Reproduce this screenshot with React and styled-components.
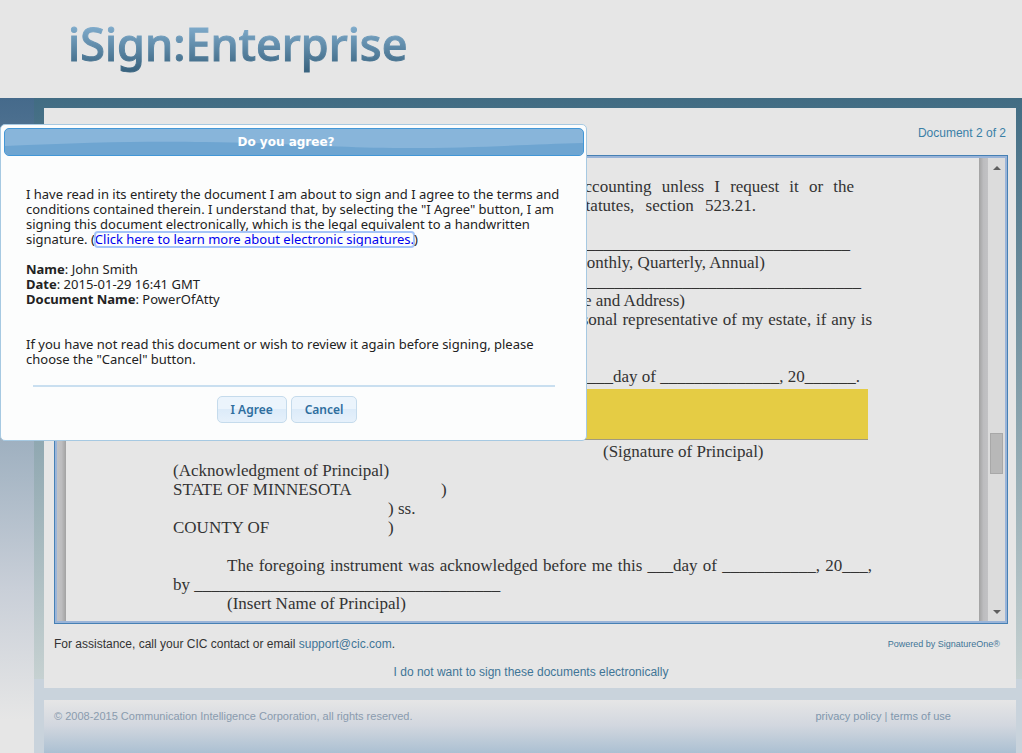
import { useState } from "react";
import styled, { createGlobalStyle } from "styled-components";

const GlobalStyle = createGlobalStyle`
    * {
        box-sizing: border-box;
    }

    body {
        margin: 0;
        background-color: #c9d3dc;
        font-family: "Liberation Sans", Arial, sans-serif;
        font-size: 12px;
        color: #333;
    }
`

// start and end are the distances from the edges of the printed text column
const paragraphs = [
    { text: "accounting unless I request it or the", start: 404, end: 18, justify: true },
    { text: "statutes, section 523.21.", start: 406, end: 116, justify: true },
    { text: "" },
    { text: "________________________________", start: 404, end: 22, right: true },
    { text: "(Monthly, Quarterly, Annual)", start: 393 },
    { text: "_________________________________", start: 404, end: 11, right: true },
    { text: "(Name and Address)", end: 187, right: true },
    { text: "personal representative of my estate, if any is", start: 387, justify: true },
    { text: "" },
    { text: "" },
    { text: "_____day of ______________, 20______.", end: 12, right: true },
];

const acknowledgment = [
    [{ text: "(Signature of Principal)", start: 430 }],
    [{ text: "(Acknowledgment of Principal)" }],
    [{ text: "STATE OF MINNESOTA", width: 268 }, { text: ")" }],
    [{ text: ") ss.", start: 215 }],
    [{ text: "COUNTY OF", width: 215 }, { text: ")" }],
    [{ text: "" }],
    [{ text: "The foregoing instrument was acknowledged before me this ___day of ___________, 20___,", start: 54, justify: true }],
    [{ text: "by ____________________________________" }],
    [{ text: "(Insert Name of Principal)", start: 54 }],
];

const DocumentPage = () => {
    return (
        <Page>
            <Sheet>
                {paragraphs.map((line, index) => (
                    <Line key={index} $start={line.start} $end={line.end}>
                        <Segment $justify={line.justify} $right={line.right}>{line.text}</Segment>
                    </Line>
                ))}
                <SignatureField aria-label="Signature of Principal" />
                {acknowledgment.map((line, index) => (
                    <Line key={index} $start={line[0].start}>
                        {line.map((segment, i) => (
                            <Segment key={i} $justify={segment.justify} $width={segment.width}>{segment.text}</Segment>
                        ))}
                    </Line>
                ))}
            </Sheet>
        </Page>
    );
};

const AgreeDialog = ({ onClose }) => {
    return (
        <Dialog role="dialog" aria-labelledby="agree-title">
            <TitleBar>
                <Gloss viewBox="0 0 580 26" preserveAspectRatio="none" aria-hidden="true">
                    <path d="M0 17 C80 13 150 12 200 13 C290 14 330 19 400 19 C480 19 530 15 580 14 V26 H0 Z" fill="#6ea5d1" />
                </Gloss>
                <Title id="agree-title">Do you agree?</Title>
            </TitleBar>
            <DialogBody>
                <P>
                    I have read in its entirety the document I am about to sign and I agree to the terms and
                    conditions contained therein. I understand that, by selecting the "I Agree" button, I am
                    signing this document electronically, which is the legal equivalent to a handwritten
                    signature. (<LearnLink href="#learn">Click here to learn more about electronic signatures.</LearnLink>)
                </P>
                <Details>
                    <li><B>Name</B>: John Smith</li>
                    <li><B>Date</B>: 2015-01-29 16:41 GMT</li>
                    <li><B>Document Name</B>: PowerOfAtty</li>
                </Details>
                <P>
                    If you have not read this document or wish to review it again before signing, please
                    choose the "Cancel" button.
                </P>
            </DialogBody>
            <ButtonPane>
                <Button type="button" onClick={onClose}>I Agree</Button>
                <Button type="button" onClick={onClose}>Cancel</Button>
            </ButtonPane>
        </Dialog>
    );
};

const App = () => {

    const [open, setOpen] = useState(true);

    return (
        <>
            <GlobalStyle />
            <Header>
                <Logo>iSign:Enterprise</Logo>
            </Header>
            <Body>
                <Gutter />
                <Content>
                    <Card>
                        <Counter>Document 2 of 2</Counter>
                        <Frame>
                            <DocumentPage />
                            <Scrollbar>
                                <ScrollButton type="button" aria-label="Scroll up">
                                    <svg width="8" height="4" viewBox="0 0 8 4"><path d="M0 4 L4 0 L8 4 Z" fill="#5f5f5f" /></svg>
                                </ScrollButton>
                                <Track><Thumb /></Track>
                                <ScrollButton type="button" aria-label="Scroll down">
                                    <svg width="8" height="4" viewBox="0 0 8 4"><path d="M0 0 L4 4 L8 0 Z" fill="#5f5f5f" /></svg>
                                </ScrollButton>
                            </Scrollbar>
                        </Frame>
                        <Assistance>
                            <span>For assistance, call your CIC contact or email <A href="mailto:support@cic.com">support@cic.com</A>.</span>
                            <Powered href="#signatureone">Powered by SignatureOne®</Powered>
                        </Assistance>
                        <OptOut>
                            <A href="#opt-out">I do not want to sign these documents electronically</A>
                        </OptOut>
                    </Card>
                    <Footer>
                        <span>© 2008-2015 Communication Intelligence Corporation, all rights reserved.</span>
                        <span><FooterLink href="#privacy">privacy policy</FooterLink> | <FooterLink href="#terms">terms of use</FooterLink></span>
                    </Footer>
                </Content>
            </Body>
            {open && <AgreeDialog onClose={() => setOpen(false)} />}
        </>
    );
};

const Header = styled.header`
    height: 98px;
    padding: 13px 68px;
    background-color: #e6e6e6;
`

const Logo = styled.h1`
    display: inline-block;
    margin: 0;
    font-family: "Noto Sans", sans-serif;
    font-size: 45px;
    font-weight: 500;
    line-height: 62px;
    color: transparent;
    -webkit-text-stroke: 1px transparent;
    background: linear-gradient(#7fabcb 22%, #3a6480 92%);
    background-clip: text;
`

const Body = styled.div`
    display: flex;
    min-height: calc(100vh - 98px);
`

const Gutter = styled.div`
    flex: 0 0 34px;
    background: linear-gradient(#456a8b, #a9b8c6 58%, #c9cfd8 75%, #e6e6e6 95%);
`

const Content = styled.div`
    flex: 1;
    display: flex;
    flex-direction: column;
    gap: 12px;
    padding: 10px 6px 0 10px;
    background: linear-gradient(#416c83, #c6d1d1) top / 100% 581px no-repeat #c9d3dc;
`

const Card = styled.main`
    padding: 17px 8px 8px 10px;
    background-color: #e6e6e6;
`

const Counter = styled.div`
    padding-right: 2px;
    margin-bottom: 14px;
    line-height: 16px;
    text-align: right;
    color: #3a80a6;
`

const Frame = styled.div`
    display: flex;
    height: 469px;
    border: 1px solid #4680b4;
    box-shadow: inset 0 0 0 2px #9ab4d8;
    padding: 2px;
`

const Page = styled.div`
    flex: 1;
    display: flex;
    padding: 0 9px;
    overflow: hidden;
    background:
        linear-gradient(to right, #c2c2c4, #bdbdbf 50%, #a2a2a2) left / 9px 100% no-repeat,
        linear-gradient(to left, #c2c2c4, #bdbdbf 50%, #a2a2a2) right / 9px 100% no-repeat;
`

const Sheet = styled.div`
    flex: 1;
    display: flex;
    flex-direction: column;
    justify-content: flex-end;
    padding: 0 107px 8px;
    font-family: "Liberation Serif", "Times New Roman", serif;
    font-size: 17px;
    line-height: 19px;
    color: #333;
`

const Line = styled.div`
    display: flex;
    flex: 0 0 19px;
    padding-left: ${({ $start = 0 }) => $start}px;
    padding-right: ${({ $end = 0 }) => $end}px;
    white-space: nowrap;
`

const Segment = styled.span`
    flex: ${({ $width }) => $width ? `0 0 ${$width}px` : 1};
    text-align: ${({ $right }) => $right ? 'right' : 'left'};
    text-align-last: ${({ $justify }) => $justify && 'justify'};
    white-space: ${({ $justify }) => $justify && 'normal'};
`

const SignatureField = styled.div`
    flex: 0 0 51px;
    margin: 3px 4px 2px 250px;
    background-color: #e5cc44;
    border-bottom: 1px solid #a09a80;
`

const Scrollbar = styled.div`
    flex: 0 0 17px;
    display: flex;
    flex-direction: column;
    background-color: #dcdcdc;
`

const ScrollButton = styled.button`
    display: flex;
    align-items: center;
    justify-content: center;
    height: 19px;
    padding: 0;
    border: 0;
    background: none;
`

const Track = styled.div`
    flex: 1;
    padding: 256px 2px 0;
`

const Thumb = styled.div`
    height: 41px;
    border: 1px solid #a8a8a8;
    background-color: #b8b8b8;
`

const Assistance = styled.div`
    display: flex;
    justify-content: space-between;
    padding: 12px 8px 0 0;
    line-height: 16px;
`

const OptOut = styled.div`
    padding: 12px 0 0;
    line-height: 16px;
    text-align: center;
`

const A = styled.a`
    color: #3f7596;
    text-decoration: none;
`

const Powered = styled(A)`
    font-size: 9px;
`

const Footer = styled.footer`
    flex: 1;
    display: flex;
    justify-content: space-between;
    padding: 8px 65px 0 10px;
    font-size: 11px;
    line-height: 16px;
    color: #8a9bae;
    background: linear-gradient(#e6e6e6, #d2d7df 48%, #abc0d2);
`

const FooterLink = styled.a`
    color: #7f97ad;
    text-decoration: none;
`

const Dialog = styled.div`
    position: absolute;
    top: 124px;
    left: 0;
    width: 587px;
    padding: 3px 2px 17px 3px;
    border: 1px solid #a6c9e2;
    border-radius: 5px;
    background-color: #fcfdfd;
    font-family: "Noto Sans", sans-serif;
    font-size: 13px;
    line-height: 15px;
    color: #222;
`

const TitleBar = styled.div`
    display: grid;
    height: 28px;
    border: 1px solid #4297d7;
    border-radius: 5px;
    background-color: #88b5da;
    overflow: hidden;
`

const Gloss = styled.svg`
    grid-area: 1 / 1;
    width: 100%;
    height: 26px;
`

const Title = styled.h2`
    grid-area: 1 / 1;
    margin: 0;
    padding-right: 16px;
    font-family: "DejaVu Sans", Verdana, sans-serif;
    font-size: 12px;
    line-height: 26px;
    text-align: center;
    color: #fff;
    z-index: 1;
`

const DialogBody = styled.div`
    padding: 31px 22px 0;
`

const P = styled.p`
    margin: 0;
`

const LearnLink = styled.a`
    display: inline-block;
    color: #00e;
    text-decoration: none;
    border-radius: 3px;
    outline: 2px solid #a4c4f8;
    outline-offset: -1px;
`

const Details = styled.ul`
    margin: 15px 0 30px;
    padding: 0;
    list-style: none;
`

const B = styled.b`
    font-weight: bold;
`

const ButtonPane = styled.div`
    display: flex;
    justify-content: center;
    gap: 4px;
    margin: 18px 29px 0;
    padding: 9px 14px 0 0;
    border-top: 2px solid #c9dff0;
`

const Button = styled.button`
    height: 27px;
    padding: 0 13px;
    border: 1px solid #c5dbec;
    border-radius: 5px;
    background: linear-gradient(#ebf4fc 50%, #dcebf9 50%, #e6f1fb);
    font-family: "Noto Sans", sans-serif;
    font-size: 12px;
    font-weight: 600;
    color: #2e6e9e;
`

export default App;
